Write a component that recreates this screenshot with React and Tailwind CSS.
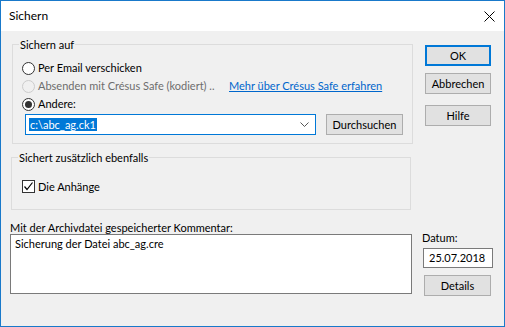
function Radio({ checked, disabled }) {
  return (
    <span
      className={
        disabled
          ? "w-[13px] h-[13px] rounded-full border border-[#cccccc] bg-[#f0f0f0] flex items-center justify-center shrink-0"
          : "w-[13px] h-[13px] rounded-full border border-[#333333] bg-white flex items-center justify-center shrink-0"
      }
    >
      {checked && <span className="w-[7px] h-[7px] rounded-full bg-[#333333]" />}
    </span>
  );
}

function Btn({ children, className }) {
  return (
    <div
      className={
        "h-[21px] bg-[#e1e1e1] border border-[#adadad] flex items-center justify-center shrink-0 " +
        className
      }
    >
      {children}
    </div>
  );
}

export default function App() {
  return (
    <div className="w-[505px] h-[327px] border border-[#1979ca] bg-[#f0f0f0] flex flex-col font-['Lato',sans-serif] text-[11px] leading-[16px] text-black overflow-hidden">
      {/* Title bar */}
      <div className="h-[30px] shrink-0 bg-white flex items-center justify-between pl-[8px] pr-[9px] text-[12px]">
        <span>Sichern</span>
        <svg width="11" height="11" viewBox="0 0 11 11">
          <path d="M0.5 0.5L10.5 10.5M10.5 0.5L0.5 10.5" stroke="#000" strokeWidth="1" />
        </svg>
      </div>

      {/* Top section */}
      <div className="flex">
        <div className="pl-[10px] pt-[13px] flex flex-col">
          {/* Group 1 */}
          <div className="relative ml-[1px] w-[401px] h-[100px] border border-[#dcdcdc] pt-[14px] pl-[9px] flex flex-col">
            <span className="absolute left-[6px] top-[-8px] px-[1px] bg-[#f0f0f0] whitespace-nowrap">
              Sichern auf
            </span>
            <div className="h-[18px] flex items-center gap-[3px]">
              <Radio />
              <span className="whitespace-nowrap">Per Email verschicken</span>
            </div>
            <div className="h-[18px] flex items-center">
              <div className="w-[207px] shrink-0 flex items-center gap-[3px]">
                <Radio disabled />
                <span className="whitespace-nowrap text-[#6d6d6d]">
                  Absenden mit Crésus Safe (kodiert) ..
                </span>
              </div>
              <span className="whitespace-nowrap text-[#0066cc] underline">
                Mehr über Crésus Safe erfahren
              </span>
            </div>
            <div className="h-[18px] flex items-center gap-[3px]">
              <Radio checked />
              <span className="whitespace-nowrap">Andere:</span>
            </div>
            <div className="mt-[1px] ml-[3px] flex items-center">
              <div className="w-[291px] h-[21px] border border-[#0078d7] bg-white flex items-center justify-between pl-[3px] pr-[6px]">
                <span className="bg-[#0078d7] text-white leading-[13px] px-[1px] whitespace-nowrap">
                  {"c:\\abc_ag.ck1"}
                </span>
                <svg width="9" height="5" viewBox="0 0 9 5">
                  <path d="M0.5 0.5L4.5 4.5L8.5 0.5" stroke="#555" strokeWidth="1" fill="none" />
                </svg>
              </div>
              <Btn className="ml-[10px] w-[77px]">Durchsuchen</Btn>
            </div>
          </div>

          {/* Group 2 */}
          <div className="relative mt-[13px] w-[400px] h-[53px] border border-[#dcdcdc] pt-[22px] pl-[10px]">
            <span className="absolute left-[6px] top-[-8px] px-[1px] bg-[#f0f0f0] whitespace-nowrap">
              Sichert zusätzlich ebenfalls
            </span>
            <div className="h-[13px] flex items-center gap-[3px]">
              <span className="w-[13px] h-[13px] border border-[#333333] bg-white flex items-center justify-center shrink-0">
                <svg width="11" height="11" viewBox="0 0 11 11">
                  <path d="M1.5 5.5L4 8.5L9.5 1.5" stroke="#000" strokeWidth="1.2" fill="none" />
                </svg>
              </span>
              <span className="whitespace-nowrap">Die Anhänge</span>
            </div>
          </div>
        </div>

        {/* Right buttons */}
        <div className="ml-[12px] pt-[14px] flex flex-col">
          <div className="w-[66px] h-[21px] bg-[#e1e1e1] border-2 border-[#0078d7] flex items-center justify-center">
            OK
          </div>
          <Btn className="mt-[7px] w-[66px]">Abbrechen</Btn>
          <Btn className="mt-[11px] w-[66px]">Hilfe</Btn>
        </div>
      </div>

      {/* Bottom section */}
      <div className="mt-[11px] pl-[9px] flex">
        <div className="flex flex-col">
          <span className="h-[13px] leading-[13px] whitespace-nowrap">
            Mit der Archivdatei gespeicherter Kommentar:
          </span>
          <div className="w-[402px] h-[60px] border border-[#7a7a7a] bg-white pl-[4px] pt-[1px]">
            Sicherung der Datei abc_ag.cre
          </div>
        </div>
        <div className="ml-[10px] pt-[9px] flex flex-col">
          <span className="whitespace-nowrap">Datum:</span>
          <div className="mt-[2px] ml-[1px] w-[70px] h-[20px] border border-[#7a7a7a] bg-white flex items-center pl-[5px]">
            25.07.2018
          </div>
          <Btn className="mt-[7px] ml-[2px] w-[67px]">Details</Btn>
        </div>
      </div>
    </div>
  );
}
